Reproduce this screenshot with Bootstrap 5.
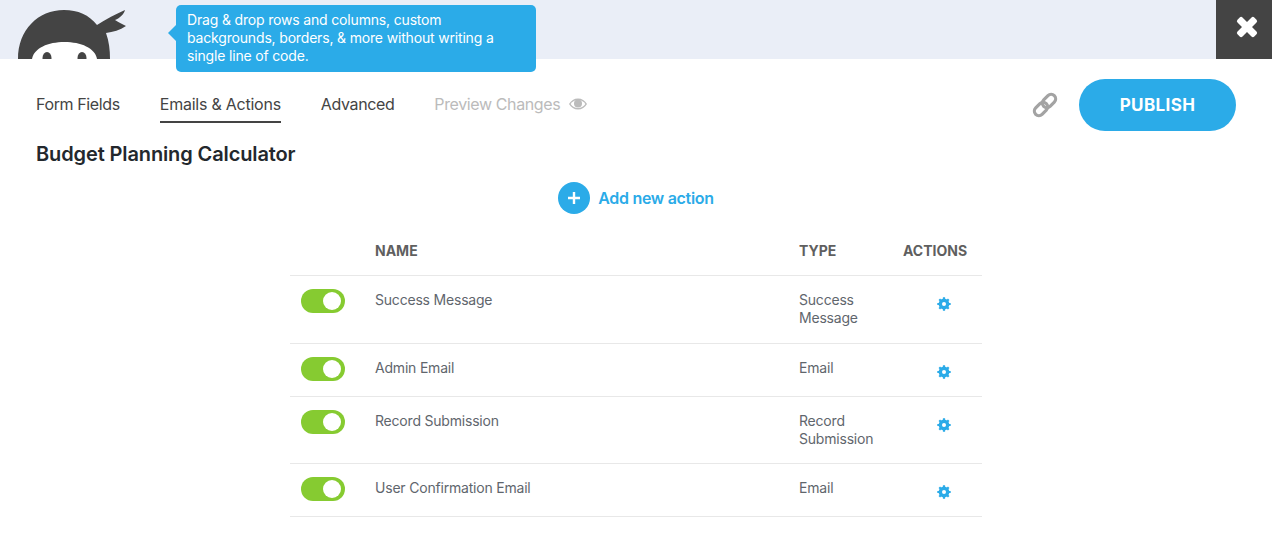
<!DOCTYPE html>
<html lang="en">
<head>
    <meta charset="UTF-8">
    <title>Budget Planning Calculator</title>
    <link href="https://cdn.jsdelivr.net/npm/bootstrap@5.3.0/dist/css/bootstrap.min.css" rel="stylesheet">
    <style>
        body { font-family: Inter, "Liberation Sans", sans-serif; color: #444; background: #fff; overflow: hidden; }
        .top-strip { height: 59px; background: #eaeef7; }
        .ninja-logo { margin-left: 18px; margin-top: 10px; width: 110px; height: 49px; display: block; }
        .drag-tip { position: absolute; left: 176px; top: 5px; width: 360px; height: 67px; background: #2babe8; color: #fff; font-size: 14px; letter-spacing: -.17px; line-height: 18px; padding: 6px 11px; border-radius: 5px; z-index: 2; }
        .drag-tip::before { content: ""; position: absolute; left: -8px; top: 20px; border: 8px solid transparent; border-left: 0; border-right-color: #2babe8; }
        .close-box { width: 56px; height: 59px; background: #444; padding: 0 0 5px 5px; }
        .builder-head { padding: 20px 36px 0; height: 72px; }
        .tab-link { font-size: 16px; letter-spacing: -.38px; color: #444; text-decoration: none; line-height: 24px; padding: 13px 0 5px; margin-right: 40px; border-bottom: 2px solid transparent; height: 44px; }
        .tab-link.on { border-bottom-color: #444; letter-spacing: -.24px; }
        .tab-link.off { color: #bbb; }
        .eye-icon { margin: 5px 0 0 1px; }
        .chain-icon { margin-right: 20px; }
        .publish-btn { width: 157px; height: 52px; padding: 2px 0 0; background: #2babe8; color: #fff; font-size: 17px; font-weight: 700; letter-spacing: .4px; border-radius: 26px; border: 0; }
        .form-title { font-size: 20px; font-weight: 600; letter-spacing: -.12px; color: #23282d; line-height: 24px; margin: 11px 36px 0; }
        .add-row { margin-top: 16px; height: 32px; }
        .add-dot { width: 32px; height: 32px; border-radius: 50%; background: #2babe8; }
        .add-text { color: #2babe8; font-size: 16px; font-weight: 600; letter-spacing: -.3px; margin-left: 8px; text-decoration: none; }
        .actions-table { width: 692px; margin: 20px 0 0 290px; table-layout: fixed; font-size: 14px; letter-spacing: -.2px; line-height: 18px; color: #5f666d; }
        .col-toggle { width: 85px; }
        .col-name { width: 424px; }
        .col-type { width: 104px; }
        .col-act { width: 79px; }
        .actions-table th { height: 41px; padding: 8px 0 0; font-size: 14px; font-weight: 700; color: #5f5f5f; letter-spacing: 0; vertical-align: top; border-bottom: 1px solid #e8e8e8; }
        .actions-table td { height: 53px; padding: 15px 0 16px; vertical-align: top; border-bottom: 1px solid #e8e8e8; }
        .actions-table tr:nth-child(3) td { padding-bottom: 15px; }
        .toggle-pill { display: block; width: 44px; height: 24px; border-radius: 12px; background: #86cb31; margin: -2px 0 -4px 11px; position: relative; }
        .toggle-pill::after { content: ""; position: absolute; right: 4px; top: 3px; width: 18px; height: 18px; border-radius: 50%; background: #fff; }
        .gear-icon { display: block; width: 14px; height: 14px; margin: 6px 0 0 34px; }
    </style>
</head>
<body>
    <div class="top-strip d-flex justify-content-between">
        <svg class="ninja-logo" viewBox="0 0 110 49">
            <path d="M0 49C0 20 20 0 46 0C60 0 71 5 79 15C88 9 98 4 107 0C106 4 102 8 97 10C100 12 104 14 108 16C102 20 95 22 88 23C91 31 92 40 92 49Z" fill="#444"/>
            <path d="M14 49C16 38 30 32 46.500 32C63 32 77 38 79 49Z" fill="#fff"/>
            <ellipse cx="29" cy="48" rx="4.500" ry="6" fill="#444"/>
            <ellipse cx="64" cy="48" rx="4.500" ry="6" fill="#444"/>
        </svg>
        <div class="close-box d-flex align-items-center justify-content-center">
            <svg width="22" height="22" viewBox="0 0 22 22"><path d="M6.500 1.500 11 6l4.500-4.500a2 2 0 0 1 2.800 0l2.200 2.200a2 2 0 0 1 0 2.800L16 11l4.500 4.500a2 2 0 0 1 0 2.800l-2.200 2.200a2 2 0 0 1-2.800 0L11 16l-4.500 4.500a2 2 0 0 1-2.800 0l-2.200-2.200a2 2 0 0 1 0-2.800L6 11 1.500 6.500a2 2 0 0 1 0-2.800l2.200-2.200a2 2 0 0 1 2.800 0Z" fill="#fff"/></svg>
        </div>
    </div>
    <div class="drag-tip">Drag &amp; drop rows and columns, custom backgrounds, borders, &amp; more without writing a single line of code.</div>

    <div class="builder-head d-flex justify-content-between align-items-start">
        <nav class="d-flex">
            <a class="tab-link" href="#">Form Fields</a>
            <a class="tab-link on" href="#">Emails &amp; Actions</a>
            <a class="tab-link" href="#">Advanced</a>
            <a class="tab-link off d-flex gap-2" href="#">Preview Changes
                <svg class="eye-icon" width="18" height="14" viewBox="0 0 18 14"><path d="M0 7C2 3.500 5.200 1.500 9 1.500S16 3.500 18 7c-2 3.500-5.200 5.500-9 5.500S2 10.500 0 7Z" fill="#bbb"/><path d="M1.600 7C3.400 4.400 6 3 9 3s5.600 1.400 7.400 4C14.600 9.600 12 11 9 11S3.400 9.600 1.600 7Z" fill="#fff"/><circle cx="9" cy="6.600" r="4" fill="#bbb"/></svg>
            </a>
        </nav>
        <div class="d-flex align-items-center">
            <svg class="chain-icon" width="28" height="28" viewBox="0 0 28 28" fill="none" stroke="#a3a3a3" stroke-width="3.200">
                <rect x="13.500" y="2.500" width="9" height="15" rx="4.500" transform="rotate(45 18 10)"/>
                <rect x="5.500" y="10.500" width="9" height="15" rx="4.500" transform="rotate(45 10 18)"/>
            </svg>
            <button class="publish-btn" type="button">PUBLISH</button>
        </div>
    </div>

    <div class="form-title">Budget Planning Calculator</div>

    <div class="add-row d-flex justify-content-center align-items-center">
        <span class="add-dot d-flex align-items-center justify-content-center">
            <svg width="14" height="14" viewBox="0 0 14 14"><path d="M7 1v12M1 7h12" stroke="#fff" stroke-width="2.400"/></svg>
        </span>
        <a class="add-text" href="#">Add new action</a>
    </div>

    <table class="actions-table">
        <colgroup><col class="col-toggle"><col class="col-name"><col class="col-type"><col class="col-act"></colgroup>
        <thead>
            <tr><th></th><th>NAME</th><th>TYPE</th><th>ACTIONS</th></tr>
        </thead>
        <tbody id="rows"></tbody>
    </table>

    <script>
        var rows = [
            ["Success Message", "Success<br>Message"],
            ["Admin Email", "Email"],
            ["Record Submission", "Record<br>Submission"],
            ["User Confirmation Email", "Email"]
        ];
        var gear = '<svg class="gear-icon" viewBox="0 0 14 14"><circle cx="7" cy="7" r="3.800" fill="none" stroke="#2babe8" stroke-width="3.200"/><path d="M7 .3v13.400M.3 7h13.400M2.300 2.300l9.400 9.400M11.700 2.300l-9.400 9.400" stroke="#2babe8" stroke-width="2.200"/><circle cx="7" cy="7" r="2" fill="#fff"/></svg>';
        var html = "";
        for (var i = 0; i < rows.length; i++) {
            html += '<tr><td><span class="toggle-pill"></span></td><td>' + rows[i][0] + '</td><td>' + rows[i][1] + '</td><td>' + gear + '</td></tr>';
        }
        document.getElementById("rows").innerHTML = html;
    </script>
    <script src="https://cdn.jsdelivr.net/npm/bootstrap@5.3.0/dist/js/bootstrap.bundle.min.js"></script>
</body>
</html>
